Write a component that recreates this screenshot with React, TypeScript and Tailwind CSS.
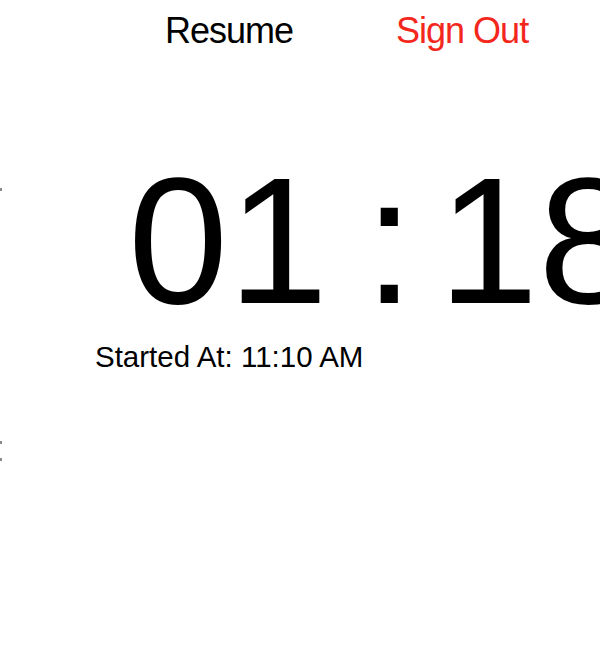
import React from "react";

const App: React.FC = () => {
  return (
    <div
      className="relative h-[650px] w-full overflow-hidden bg-white text-black"
      style={{ fontFamily: '"Liberation Sans", Arial, sans-serif' }}
    >
      {/* clipped bits of the panel to the left */}
      <div className="absolute left-0 top-[188px] h-[3px] w-[2px] bg-[#8a8a8a]" />
      <div className="absolute left-0 top-[441px] h-[3px] w-[2px] bg-[#8a8a8a]" />
      <div className="absolute left-0 top-[458px] h-[3px] w-[2px] bg-[#8a8a8a]" />

      {/* Top actions */}
      <div className="flex items-start pl-[165px] pt-[13px] text-[36px] leading-none tracking-[-1px]">
        <button className="h-[36px] text-black">Resume</button>
        <button className="ml-[103px] h-[36px] text-[#f4271d]">Sign Out</button>
      </div>

      {/* Timer */}
      <div className="mt-[102px] flex whitespace-nowrap pl-[128px] text-[180px] leading-none">
        <span>01</span>
        <span className="ml-[36px]">:</span>
        <span className="ml-[24px]">18</span>
      </div>

      <div className="mt-[11px] pl-[95px] text-[29.5px] leading-none">
        Started At: 11:10 AM
      </div>
    </div>
  );
};

export default App;
